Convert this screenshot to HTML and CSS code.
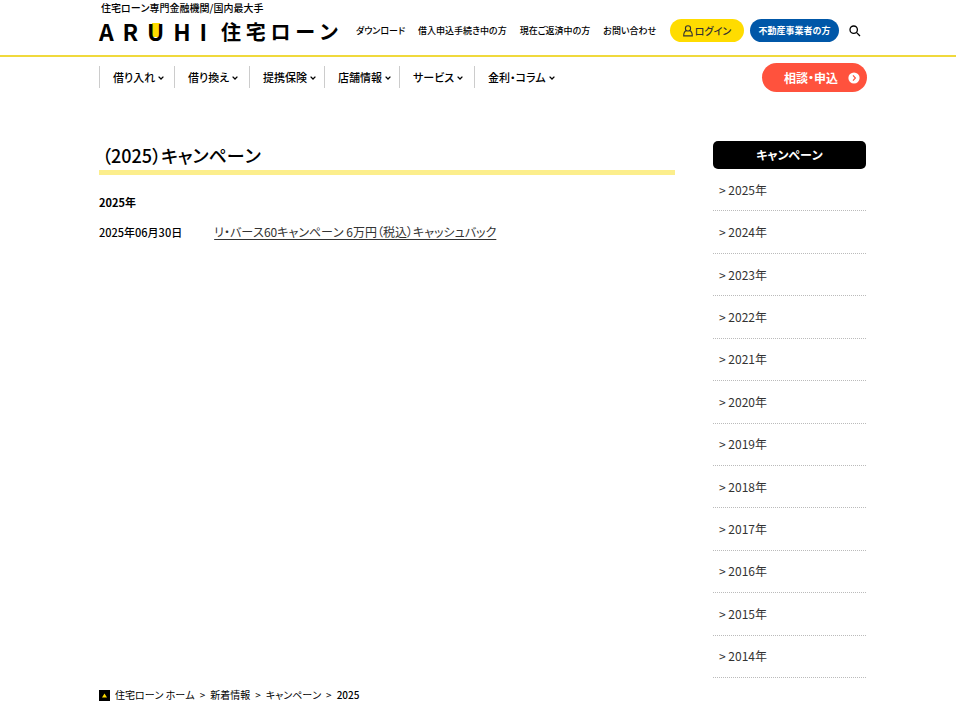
FILE: index.html
```
<!DOCTYPE html>
<html lang="ja">
<head>
    <meta charset="UTF-8">
    <meta name="viewport" content="width=device-width, initial-scale=1.0">
    <title>（2025）キャンペーン | ARUHI 住宅ローン</title>
    <link rel="stylesheet" href="styles.css">
</head>
<body>
    <header class="header">
        <div class="container header-inner">
            <div class="brand">
                <p class="tagline">住宅ローン専門金融機関/国内最大手</p>
                <a class="logo" href="#">
                    <span class="logo-en"><span>A</span><span>R</span><span class="logo-u">U</span><span>H</span><span>I</span></span>
                    <span class="logo-ja"><span>住</span><span>宅</span><span>ロ</span><span>ー</span><span>ン</span></span>
                </a>
            </div>
            <nav class="sub-nav">
                <a href="#">ダウンロード</a>
                <a href="#">借入申込手続き中の方</a>
                <a href="#">現在ご返済中の方</a>
                <a href="#">お問い合わせ</a>
            </nav>
            <div class="header-buttons">
                <a class="pill login" href="#">
                    <svg width="10" height="12" viewBox="0 0 10 12" fill="none" stroke="#333" stroke-width="1.1"><circle cx="5" cy="3.4" r="2.6"/><path d="M3.3 5.6C1.5 6.4.7 8 .7 10.9h8.6C9.3 8 8.5 6.4 6.7 5.6"/></svg>
                    ログイン
                </a>
                <a class="pill agent" href="#">不動産事業者の方</a>
                <button class="search" type="button" aria-label="検索">
                    <svg width="12" height="12" viewBox="0 0 12 12" fill="none" stroke="#000" stroke-width="1.3"><circle cx="4.7" cy="4.7" r="3.7"/><path d="M7.4 7.4L11 11"/></svg>
                </button>
            </div>
        </div>
    </header>

    <div class="container nav-bar">
        <nav class="global-nav">
            <a href="#">借り入れ<svg class="arrow" viewBox="0 0 6 4"><path d="M.6.6L3 3L5.4.6"/></svg></a>
            <a href="#">借り換え<svg class="arrow" viewBox="0 0 6 4"><path d="M.6.6L3 3L5.4.6"/></svg></a>
            <a href="#">提携保険<svg class="arrow" viewBox="0 0 6 4"><path d="M.6.6L3 3L5.4.6"/></svg></a>
            <a href="#">店舗情報<svg class="arrow" viewBox="0 0 6 4"><path d="M.6.6L3 3L5.4.6"/></svg></a>
            <a href="#">サービス<svg class="arrow" viewBox="0 0 6 4"><path d="M.6.6L3 3L5.4.6"/></svg></a>
            <a href="#">金利・コラム<svg class="arrow" viewBox="0 0 6 4"><path d="M.6.6L3 3L5.4.6"/></svg></a>
        </nav>
        <a class="apply" href="#">
            相談・申込
            <svg width="12" height="12" viewBox="0 0 12 12"><circle cx="6" cy="6" r="5.6" fill="#fff"/><path d="M5 3.4L7.4 6L5 8.6" fill="none" stroke="#ff523d" stroke-width="1.2"/></svg>
        </a>
    </div>

    <div class="container content">
        <main class="main">
            <h1 class="page-title">（2025）キャンペーン</h1>
            <h2 class="year">2025年</h2>
            <div class="news">
                <time class="news-date" datetime="2025-06-30">2025年06月30日</time>
                <a href="#">リ・バース60キャンペーン 6万円（税込）キャッシュバック</a>
            </div>
        </main>
        <aside class="sidebar">
            <h2 class="sidebar-title">キャンペーン</h2>
            <ul class="year-list">
                <li><a href="#">&gt; 2025年</a></li>
                <li><a href="#">&gt; 2024年</a></li>
                <li><a href="#">&gt; 2023年</a></li>
                <li><a href="#">&gt; 2022年</a></li>
                <li><a href="#">&gt; 2021年</a></li>
                <li><a href="#">&gt; 2020年</a></li>
                <li><a href="#">&gt; 2019年</a></li>
                <li><a href="#">&gt; 2018年</a></li>
                <li><a href="#">&gt; 2017年</a></li>
                <li><a href="#">&gt; 2016年</a></li>
                <li><a href="#">&gt; 2015年</a></li>
                <li><a href="#">&gt; 2014年</a></li>
            </ul>
        </aside>
    </div>

    <nav class="container breadcrumb" aria-label="パンくずリスト">
        <svg width="11" height="11" viewBox="0 0 11 11"><rect width="11" height="11" fill="#000"/><path d="M5.5 3.6L8 7.5H3z" fill="#ffdc00"/></svg>
        <a href="#">住宅ローン ホーム</a>
        <span>&gt;</span>
        <a href="#">新着情報</a>
        <span>&gt;</span>
        <a href="#">キャンペーン</a>
        <span>&gt;</span>
        <span class="current">2025</span>
    </nav>
</body>
</html>
```
FILE: styles.css
```
* {
    box-sizing: border-box;
}

body {
    margin: 0;
    background: #fff;
    color: #000;
    font-family: "Noto Sans CJK JP", sans-serif;
    font-size: 12px;
    line-height: 18px;
    font-feature-settings: "palt";
    font-kerning: none;
}

h1, h2, p, ul {
    margin: 0;
    padding: 0;
}

a {
    color: inherit;
    text-decoration: none;
}

.container {
    max-width: 778px;
    margin: 0 auto;
    padding-left: 10px;
}

/* Header */
.header {
    border-bottom: 2px solid #f0d93c;
}

.header-inner {
    display: flex;
    align-items: flex-start;
    height: 55px;
}

.brand {
    flex: none;
    width: 239px;
}

.tagline {
    padding-left: 2px;
    font-size: 10px;
    line-height: 16px;
    font-weight: 500;
    white-space: nowrap;
}

.logo {
    display: flex;
    justify-content: space-between;
    height: 32px;
    font-weight: 700;
}

.logo-en,
.logo-ja {
    display: flex;
    justify-content: space-between;
}

.logo-en {
    width: 108px;
    font-size: 23px;
    line-height: 30px;
}

.logo-ja {
    width: 117px;
    font-size: 20px;
    line-height: 32px;
}

.logo-u {
    background: linear-gradient(#ffdc00, #ffdc00) center 7px / 8px 14px no-repeat;
}

.sub-nav {
    display: flex;
    gap: 13px;
    margin-left: 18px;
    padding-top: 22px;
    font-size: 9px;
    font-weight: 500;
    white-space: nowrap;
}

.header-buttons {
    display: flex;
    align-items: center;
    margin-left: auto;
    padding: 19px 6px 0 0;
}

.pill {
    display: flex;
    align-items: center;
    justify-content: center;
    height: 23px;
    border-radius: 12px;
    white-space: nowrap;
}

.login {
    gap: 2px;
    width: 74px;
    background: #ffdc00;
    color: #333;
    font-size: 10px;
    font-weight: 500;
}

.agent {
    width: 89px;
    margin-left: 6px;
    background: #0057a8;
    color: #fff;
    font-size: 9px;
    font-weight: 700;
}

.search {
    display: flex;
    margin-left: 10px;
    padding: 0;
    border: none;
    background: none;
    cursor: pointer;
}

/* Global navigation */
.nav-bar {
    display: flex;
    justify-content: space-between;
    padding-top: 6px;
}

.global-nav {
    display: flex;
    padding-top: 3px;
    font-size: 11px;
    font-weight: 500;
    white-space: nowrap;
}

.global-nav a {
    display: flex;
    align-items: center;
    gap: 3px;
    height: 22px;
    min-width: 75px;
    padding-left: 13px;
    border-left: 1px solid #ccc;
}

.arrow {
    width: 6px;
    height: 4px;
    margin-top: 2px;
    fill: none;
    stroke: #000;
    stroke-width: 1.3;
}

.apply {
    display: flex;
    align-items: center;
    justify-content: flex-end;
    gap: 10px;
    width: 105px;
    height: 29px;
    padding-right: 7px;
    border-radius: 15px;
    background: #ff523d;
    color: #fff;
    font-size: 12px;
    font-weight: 700;
    white-space: nowrap;
}

/* Content */
.content {
    display: flex;
    gap: 38px;
    padding-top: 49px;
    padding-right: 1px;
}

.main {
    flex: 1;
}

.page-title {
    border-bottom: 5px solid #fcee8c;
    padding-left: 3px;
    font-size: 18px;
    line-height: 29px;
    font-weight: 500;
}

.year {
    margin-top: 18px;
    font-size: 11px;
    font-weight: 700;
}

.news {
    display: flex;
    gap: 32px;
    margin-top: 12px;
}

.news-date {
    font-size: 11px;
    font-weight: 500;
}

.news a {
    color: #333;
    text-decoration: underline;
    text-underline-offset: 2px;
}

.sidebar {
    width: 153px;
}

.sidebar-title {
    border-radius: 5px;
    background: #000;
    color: #fff;
    font-size: 12px;
    line-height: 28px;
    font-weight: 700;
    text-align: center;
}

.year-list {
    display: grid;
    grid-auto-rows: 1fr;
    height: 509px;
    list-style: none;
    color: #333;
}

.year-list li {
    display: flex;
    align-items: center;
    padding-left: 6px;
    border-bottom: 1px dotted #bbb;
}

/* Breadcrumb */
.breadcrumb {
    display: flex;
    align-items: center;
    gap: 5px;
    padding-top: 8px;
    font-size: 10px;
}

.current {
    font-weight: 500;
}
```
